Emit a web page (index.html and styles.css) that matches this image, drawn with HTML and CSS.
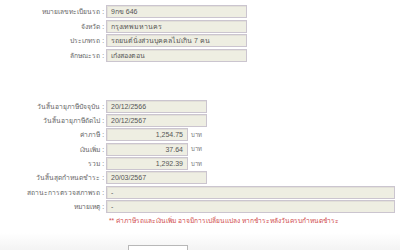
FILE: index.html
```html
<!DOCTYPE html>
<html lang="th">
<head>
  <meta charset="UTF-8">
  <title>ข้อมูลภาษีรถ</title>
  <link rel="stylesheet" href="styles.css">
</head>
<body>
  <div class="form-block car-info">
    <div class="label">หมายเลขทะเบียนรถ :</div>
    <div class="field w-mid">9กข 646</div>
    <div class="label">จังหวัด :</div>
    <div class="field w-mid">กรุงเทพมหานคร</div>
    <div class="label">ประเภทรถ :</div>
    <div class="field w-mid">รถยนต์นั่งส่วนบุคคลไม่เกิน 7 คน</div>
    <div class="label">ลักษณะรถ :</div>
    <div class="field w-mid">เก๋งสองตอน</div>
  </div>

  <div class="form-block tax-info">
    <div class="label">วันสิ้นอายุภาษีปัจจุบัน :</div>
    <div class="field w-date">20/12/2566</div>
    <div class="label">วันสิ้นอายุภาษีถัดไป :</div>
    <div class="field w-date">20/12/2567</div>
    <div class="label">ค่าภาษี :</div>
    <div class="money"><span class="field w-money">1,254.75</span><span class="unit">บาท</span></div>
    <div class="label">เงินเพิ่ม :</div>
    <div class="money"><span class="field w-money">37.64</span><span class="unit">บาท</span></div>
    <div class="label">รวม :</div>
    <div class="money"><span class="field w-money">1,292.39</span><span class="unit">บาท</span></div>
    <div class="label">วันสิ้นสุดกำหนดชำระ :</div>
    <div class="field w-date">20/03/2567</div>
    <div class="label">สถานะการตรวจสภาพรถ :</div>
    <div class="field w-full">-</div>
    <div class="label">หมายเหตุ :</div>
    <div class="field w-full">-</div>
    <div></div>
    <div class="note">** ค่าภาษีรถและเงินเพิ่ม อาจมีการเปลี่ยนแปลง หากชำระหลังวันครบกำหนดชำระ</div>
  </div>

  <div class="footer">
    <button class="back-btn" type="button" aria-label="กลับ"></button>
  </div>
</body>
</html>
```

FILE: styles.css
```css
body {
  margin: 0;
  font-family: "Liberation Sans", "Noto Sans", sans-serif;
  font-size: 7px;
  color: #555;
  background: #fff;
  overflow: hidden;
}
.form-block {
  display: grid;
  grid-template-columns: 104px 1fr;
  column-gap: 2px;
  row-gap: 1.5px;
  align-items: center;
}
.car-info {
  padding-top: 5px;
}
.tax-info {
  margin-top: 38px;
  row-gap: 1.4px;
}
.label {
  text-align: right;
  white-space: nowrap;
  font-size: 6.7px;
  color: #666;
}
.field {
  box-sizing: border-box;
  height: 13px;
  line-height: 11px;
  padding: 0 4px;
  background: #eeeee2;
  border: 1px solid #cbc5cf;
  box-shadow: inset 1px 1px 0 #e2e0d8;
  color: #555;
  white-space: nowrap;
  overflow: hidden;
}
.w-mid {
  width: 141px;
}
.w-date {
  width: 101px;
}
.w-full {
  width: 289px;
}
.money {
  display: flex;
  align-items: center;
}
.w-money {
  display: block;
  width: 82px;
  text-align: right;
}
.unit {
  margin-left: 3px;
  font-size: 6px;
  color: #777;
}
.note {
  margin-top: 2px;
  padding-left: 3px;
  color: #d04a4a;
  font-size: 6.6px;
  line-height: 8px;
}
.footer {
  margin-top: 8px;
  height: 40px;
  background: linear-gradient(to bottom, #fff 0%, #f4f4f4 40%, #f2f2f2 100%);
  padding-left: 128px;
  padding-top: 12px;
  box-sizing: border-box;
}
.back-btn {
  display: block;
  width: 60px;
  height: 16px;
  background: #fff;
  border: 1px solid #b8b8b8;
}
```
